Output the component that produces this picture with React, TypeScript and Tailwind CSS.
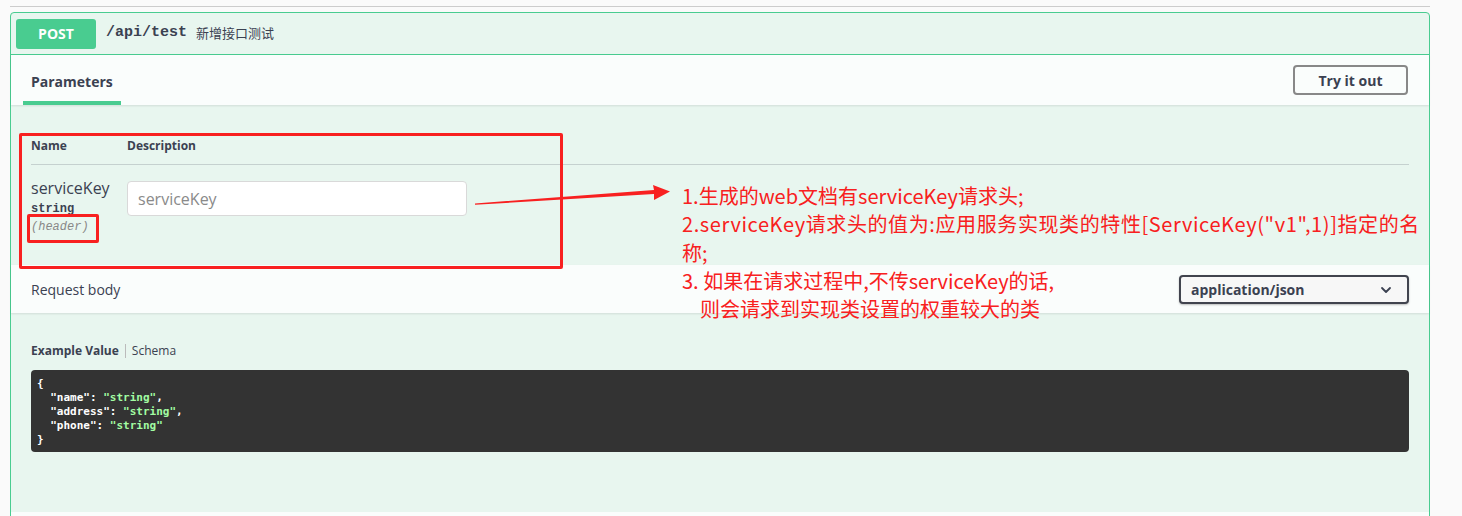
const sans = "font-['Open_Sans','Noto_Sans_CJK_SC',sans-serif]";
const mono = "font-['Liberation_Mono','Noto_Sans_CJK_SC',monospace]";
const codeFont = "font-['DejaVu_Sans_Mono',monospace]";
const note = "font-['Noto_Sans_CJK_SC','Noto_Sans',sans-serif]";

const fields = [
  { key: "name", last: false },
  { key: "address", last: false },
  { key: "phone", last: true },
];

const App = () => {
  return (
    <div className={`relative h-[516px] w-[1462px] overflow-hidden bg-[#fafafa] text-[#3b4151] ${sans}`}>
      <div className="ml-[10px] w-[1420px] pt-[6px]">
        <div className="h-px bg-[#cccccc]" />

        <div className="mt-[5px] rounded-[4px] border border-[#49cc90] bg-[#e8f6ef]">
          {/* summary */}
          <div className="flex h-[42px] items-center border-b border-[#49cc90] px-[5px]">
            <span className="flex h-[30px] w-[80px] items-center justify-center rounded-[3px] bg-[#49cc90] text-[14px] font-bold text-white">
              POST
            </span>
            <span className={`ml-[10px] text-[15px] font-bold ${mono}`}>/api/test</span>
            <span className="ml-[9px] text-[13px]">新增接口测试</span>
          </div>

          {/* parameters header */}
          <div className="flex h-[50px] items-center justify-between bg-white/80 shadow-[0_1px_2px_rgba(0,0,0,0.1)]">
            <div className="ml-[12px] flex items-center self-stretch border-b-4 border-[#49cc90] px-[8px] pt-[6px]">
              <span className="text-[14px] font-bold">Parameters</span>
            </div>
            <button className="mr-[21px] flex h-[30px] w-[115px] items-center justify-center rounded-[4px] border-2 border-[#888888] text-[14px] font-bold text-[#3b4151]">
              Try it out
            </button>
          </div>

          {/* parameters table */}
          <div className="h-[160px] px-[20px] pt-[21px]">
            <div className="flex border-b border-[#3b4151]/20 pb-[10px] pt-[12px] text-[12px] font-bold leading-[16px]">
              <span className="w-[96px]">Name</span>
              <span>Description</span>
            </div>
            <div className="flex pt-[13px]">
              <div className="flex w-[96px] flex-col">
                <span className="text-[16px] leading-[20px]">serviceKey</span>
                <span className={`mt-[2px] text-[12px] font-bold leading-[18px] ${mono}`}>string</span>
                <span className={`text-[12px] italic leading-[18px] text-[#888888] ${mono}`}>(header)</span>
              </div>
              <div className="mt-[3px] flex h-[35px] w-[340px] items-center rounded-[4px] border border-[#d9d9d9] bg-white px-[10px] text-[16px] text-[#8a8a8a]">
                serviceKey
              </div>
            </div>
          </div>

          {/* request body header */}
          <div className="flex h-[48px] items-center justify-between bg-white/80 px-[20px] shadow-[0_1px_2px_rgba(0,0,0,0.1)]">
            <span className="text-[14px]">Request body</span>
            <div className="mt-[1px] flex h-[29px] w-[230px] items-center justify-between rounded-[4px] border-2 border-[#41444e] bg-[#f7f7f7] pl-[10px] pr-[15px] shadow-[0_1px_2px_rgba(0,0,0,0.25)]">
              <span className="text-[14px] font-bold">application/json</span>
              <svg width="12" height="8" viewBox="0 0 12 8" fill="none">
                <path d="M2 2l4 4 4-4" stroke="#3b4151" strokeWidth="1.8" strokeLinecap="round" strokeLinejoin="round" />
              </svg>
            </div>
          </div>

          {/* example value */}
          <div className="px-[20px] pb-[60px] pt-[30px]">
            <div className="flex items-center text-[12px] leading-[16px]">
              <span className="font-bold">Example Value</span>
              <span className="mx-[6px] h-[14px] w-px bg-[#bbbbbb]" />
              <span>Schema</span>
            </div>
            <div
              className={`mt-[11px] rounded-[4px] bg-[#333333] px-[6px] pb-[5px] pt-[7px] text-[11px] font-bold leading-[14px] text-white ${codeFont}`}
            >
              <div>{"{"}</div>
              {fields.map(({ key, last }) => (
                <div key={key} className="whitespace-pre">
                  <span>{`  "${key}": `}</span>
                  <span className="text-[#a2fca2]">"string"</span>
                  {!last && <span>,</span>}
                </div>
              ))}
              <div>{"}"}</div>
            </div>
          </div>

          <div className="h-[50px] bg-white/80" />
        </div>
      </div>

      {/* annotations */}
      <div className="absolute left-[19px] top-[133px] h-[136px] w-[544px] rounded-[2px] border-[3px] border-[#f82020]" />
      <div className="absolute left-[27px] top-[214px] h-[29px] w-[72px] rounded-[2px] border-[3px] border-[#f82020]" />
      <svg className="absolute left-[470px] top-[180px]" width="210" height="30" viewBox="0 0 210 30">
        <polygon points="5,23.5 184,10 183,5 200,11.5 184,20 184,14 5,24.8" fill="#f82020" />
      </svg>
      <div className={`absolute left-[682px] top-[182px] whitespace-pre text-[20px] leading-[28.3px] text-[#f82020] ${note}`}>
        <div>1.生成的web文档有serviceKey请求头;</div>
        <div className="tracking-[0.6px]">2.serviceKey请求头的值为:应用服务实现类的特性[ServiceKey("v1",1)]指定的名</div>
        <div>称;</div>
        <div>3. 如果在请求过程中,不传serviceKey的话,</div>
        <div>{"    则会请求到实现类设置的权重较大的类"}</div>
      </div>
    </div>
  );
};

export default App;
